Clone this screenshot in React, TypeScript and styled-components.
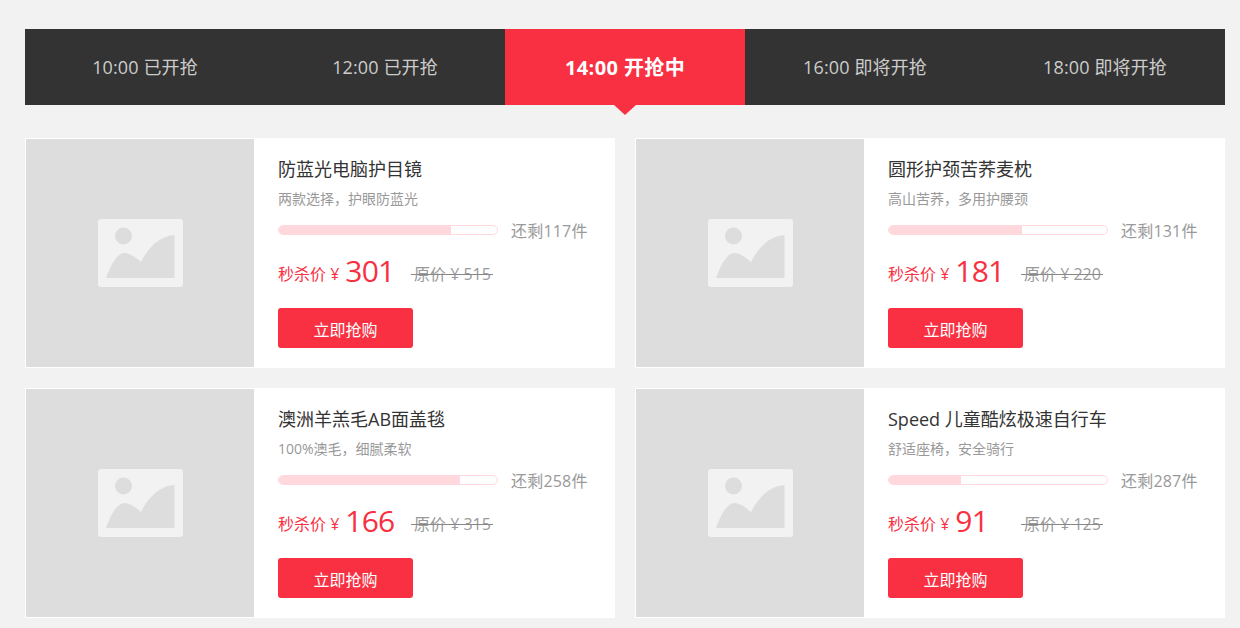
import React from 'react';
import styled, { createGlobalStyle } from 'styled-components';

interface Slot {
  label: string;
  active?: boolean;
}

interface Product {
  title: string;
  desc: string;
  sold: number;
  left: number;
  price: number;
  origin: number;
}

const slots: Slot[] = [
  { label: '10:00 已开抢' },
  { label: '12:00 已开抢' },
  { label: '14:00 开抢中', active: true },
  { label: '16:00 即将开抢' },
  { label: '18:00 即将开抢' },
];

const products: Product[] = [
  { title: '防蓝光电脑护目镜', desc: '两款选择，护眼防蓝光', sold: 79, left: 117, price: 301, origin: 515 },
  { title: '圆形护颈苦荞麦枕', desc: '高山苦荞，多用护腰颈', sold: 61, left: 131, price: 181, origin: 220 },
  { title: '澳洲羊羔毛AB面盖毯', desc: '100%澳毛，细腻柔软', sold: 83, left: 258, price: 166, origin: 315 },
  { title: 'Speed 儿童酷炫极速自行车', desc: '舒适座椅，安全骑行', sold: 33, left: 287, price: 91, origin: 125 },
];

const PlaceholderIcon = () => (
  <svg width="85" height="68" viewBox="0 0 85 68">
    <path
      fill="#f2f2f2"
      fillRule="evenodd"
      d="M3 0h79a3 3 0 0 1 3 3v62a3 3 0 0 1-3 3H3a3 3 0 0 1-3-3V3a3 3 0 0 1 3-3zM8 59h68.500V16c-16 1-27 14-33.500 27-6-5-11-9-17-9-8 1-14 14-18 25z"
    />
    <circle cx="25.500" cy="17" r="8.500" fill="#dddddd" />
  </svg>
);

const App = () => (
  <>
    <GlobalStyle />
    <Page>
      <Tabs>
        {slots.map((slot) => (
          <Tab key={slot.label} $active={slot.active}>
            {slot.label}
          </Tab>
        ))}
      </Tabs>
      <Grid>
        {products.map((item) => (
          <Card key={item.title}>
            <Thumb>
              <PlaceholderIcon />
            </Thumb>
            <Info>
              <Title>{item.title}</Title>
              <Desc>{item.desc}</Desc>
              <StockRow>
                <Progress>
                  <ProgressFill style={{ width: `${item.sold}%` }} />
                </Progress>
                <StockText>还剩{item.left}件</StockText>
              </StockRow>
              <PriceRow>
                <SalePrice>
                  秒杀价 ¥<SaleNumber>{item.price}</SaleNumber>
                </SalePrice>
                <OriginPrice>原价 ¥ {item.origin}</OriginPrice>
              </PriceRow>
              <BuyButton>立即抢购</BuyButton>
            </Info>
          </Card>
        ))}
      </Grid>
    </Page>
  </>
);

export default App;

const GlobalStyle = createGlobalStyle`
  html, body {
    margin: 0;
    padding: 0;
    background: #f2f2f2;
  }
  body {
    font-family: "Open Sans", "Noto Sans CJK SC", sans-serif;
    overflow: hidden;
  }
`;

const Page = styled.div`
  width: 1200px;
  height: 628px;
  padding-top: 29px;
  margin-left: 25px;
  box-sizing: content-box;
`;

const Tabs = styled.div`
  display: flex;
  height: 76px;
  background: #333333;
`;

const Tab = styled.div<{ $active?: boolean }>`
  position: relative;
  flex: 0 0 240px;
  display: flex;
  align-items: center;
  justify-content: center;
  padding-bottom: 2px;
  box-sizing: border-box;
  font-size: ${(p) => (p.$active ? '20px' : '18px')};
  font-weight: ${(p) => (p.$active ? 700 : 400)};
  letter-spacing: ${(p) => (p.$active ? '0.4px' : '0.12px')};
  color: ${(p) => (p.$active ? '#ffffff' : '#cccccc')};
  background: ${(p) => (p.$active ? '#f83042' : 'transparent')};

  ${(p) =>
    p.$active &&
    `&::after {
      content: '';
      position: absolute;
      left: 50%;
      top: 100%;
      margin-left: -11px;
      border-style: solid;
      border-width: 10px 11px 0;
      border-color: #f83042 transparent transparent;
    }`}
`;

const Grid = styled.div`
  display: grid;
  grid-template-columns: 590px 590px;
  grid-auto-rows: 230px;
  gap: 20px;
  margin-top: 33px;
`;

const Card = styled.div`
  display: flex;
  box-sizing: border-box;
  background: #ffffff;
  border: 1px solid #ffffff;
`;

const Thumb = styled.div`
  flex: 0 0 228px;
  height: 228px;
  display: flex;
  align-items: center;
  justify-content: center;
  background: #dddddd;
`;

const Info = styled.div`
  flex: 1;
  padding: 17px 0 0 24px;
`;

const Title = styled.div`
  font-size: 18px;
  line-height: 26px;
  color: #333333;
`;

const Desc = styled.div`
  margin-top: 7px;
  font-size: 14px;
  line-height: 20px;
  color: #999999;
`;

const StockRow = styled.div`
  display: flex;
  align-items: center;
  margin-top: 8px;
  height: 26px;
`;

const Progress = styled.div`
  box-sizing: border-box;
  width: 220px;
  height: 10px;
  border: 1px solid #ffd8de;
  border-radius: 5px;
  overflow: hidden;
`;

const ProgressFill = styled.div`
  height: 100%;
  background: #ffd8de;
`;

const StockText = styled.div`
  margin-left: 13px;
  font-size: 16px;
  letter-spacing: 0.2px;
  color: #999999;
`;

const PriceRow = styled.div`
  display: flex;
  align-items: baseline;
  margin-top: 7px;
  height: 36px;
`;

const SalePrice = styled.div`
  flex: 0 0 136px;
  font-size: 16px;
  color: #f83042;
`;

const SaleNumber = styled.span`
  margin-left: 6px;
  font-size: 30px;
  letter-spacing: -0.8px;
  vertical-align: -2px;
`;

const OriginPrice = styled.div`
  position: relative;
  padding-top: 1px;
  font-size: 16px;
  color: #999999;

  &::after {
    content: '';
    position: absolute;
    left: -3px;
    right: -2px;
    top: 55%;
    height: 1px;
    background: #888888;
  }
`;

const BuyButton = styled.button`
  display: block;
  width: 135px;
  height: 40px;
  margin-top: 22px;
  padding: 1px 0 0;
  border: none;
  border-radius: 3px;
  background: #f83042;
  color: #ffffff;
  font-family: inherit;
  font-size: 16px;
`;
